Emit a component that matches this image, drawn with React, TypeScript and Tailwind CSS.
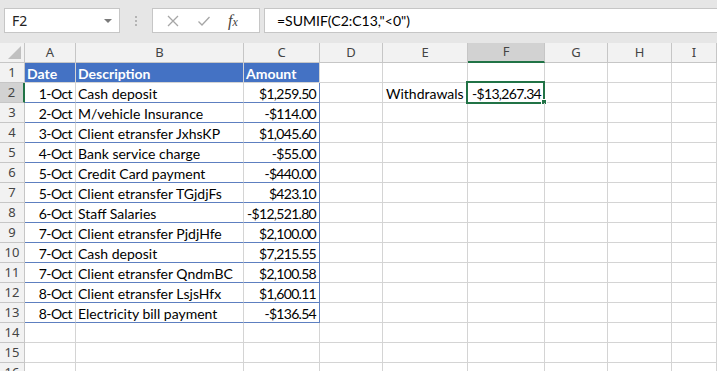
import React from 'react';

const cols = ['A', 'B', 'C', 'D', 'E', 'F', 'G', 'H', 'I'];

const rows: [string, string, string][] = [
  ['1-Oct', 'Cash deposit', '$1,259.50'],
  ['2-Oct', 'M/vehicle Insurance', '-$114.00'],
  ['3-Oct', 'Client etransfer JxhsKP', '$1,045.60'],
  ['4-Oct', 'Bank service charge', '-$55.00'],
  ['5-Oct', 'Credit Card payment', '-$440.00'],
  ['5-Oct', 'Client etransfer TGjdjFs', '$423.10'],
  ['6-Oct', 'Staff Salaries', '-$12,521.80'],
  ['7-Oct', 'Client etransfer PjdjHfe', '$2,100.00'],
  ['7-Oct', 'Cash deposit', '$7,215.55'],
  ['7-Oct', 'Client etransfer QndmBC', '$2,100.58'],
  ['8-Oct', 'Client etransfer LsjsHfx', '$1,600.11'],
  ['8-Oct', 'Electricity bill payment', '-$136.54'],
];

const cellFont = { fontFamily: 'Lato, "Liberation Sans", sans-serif' };
const uiFont = { fontFamily: '"Noto Sans", "Open Sans", sans-serif' };

const Cell: React.FC<{ className?: string; children?: React.ReactNode }> = ({ className = '', children }) => (
  <div
    className={`h-[20px] box-border border-r border-b border-[#d4d4d4] flex items-center pt-[1px] overflow-visible whitespace-nowrap text-[14px] text-black ${className}`}
    style={cellFont}
  >
    {children}
  </div>
);

export default function App() {
  const body: React.ReactNode[] = [];

  // header row
  body.push(
    <div key="corner" className="h-[20px] box-border border-r border-b border-[#c6c6c6] bg-[#f2f2f2] relative">
      <div className="absolute right-[3px] bottom-[3px] w-0 h-0 border-l-[13px] border-l-transparent border-b-[13px] border-b-[#c0c0c0]" />
    </div>
  );
  cols.forEach(c => {
    const sel = c === 'F';
    body.push(
      <div
        key={'h' + c}
        className={`h-[20px] box-border border-r border-[#c6c6c6] flex items-center justify-center text-[13px] ${
          sel ? 'bg-[#d2d2d2] text-[#444] border-b-2 border-b-[#217346]' : 'bg-[#f2f2f2] text-[#444] border-b'
        }`}
        style={uiFont}
      >
        {c}
      </div>
    );
  });

  for (let r = 1; r <= 16; r++) {
    const selRow = r === 2;
    body.push(
      <div
        key={'r' + r}
        className={`h-[20px] box-border border-b border-[#c6c6c6] flex items-center justify-center text-[13px] text-[#444] ${
          selRow ? 'bg-[#d2d2d2] border-r-2 border-r-[#217346]' : 'bg-[#f2f2f2] border-r'
        }`}
        style={uiFont}
      >
        {r}
      </div>
    );

    const data = r >= 2 && r <= 13 ? rows[r - 2] : null;
    const tableLine = 'border-b-[#5d7fc0]';

    if (r === 1) {
      body.push(
        <Cell key="a1" className="bg-[#4472c4] border-[#4472c4] text-white font-bold pl-[2px]">Date</Cell>,
        <Cell key="b1" className="bg-[#4472c4] border-[#4472c4] text-white font-bold pl-[2px]">Description</Cell>,
        <Cell key="c1" className="bg-[#4472c4] border-[#4472c4] text-white font-bold pl-[2px]">Amount</Cell>
      );
    } else if (data) {
      body.push(
        <Cell key={'a' + r} className={`justify-end pr-[3px] tracking-[-0.6px] ${tableLine}`}>{data[0]}</Cell>,
        <Cell key={'b' + r} className={`pl-[2px] ${tableLine}`}>{data[1]}</Cell>,
        <Cell key={'c' + r} className={`justify-end pr-[3px] tracking-[-0.7px] ${tableLine} border-r-[#5d7fc0]`}>{data[2]}</Cell>
      );
    } else {
      body.push(<Cell key={'a' + r} />, <Cell key={'b' + r} />, <Cell key={'c' + r} />);
    }

    // D..I
    body.push(<Cell key={'d' + r} />);
    body.push(<Cell key={'e' + r} className="pl-[3px]">{r === 2 ? 'Withdrawals' : null}</Cell>);
    body.push(
      <Cell key={'f' + r} className="justify-end pr-[3px] relative">
        {r === 2 && (
          <>
            <span className="tracking-[-0.7px]">-$13,267.34</span>
            <div className="absolute -left-[2px] -top-[2px] w-[79px] h-[23px] border-2 border-[#217346]" />
            <div className="absolute -right-[3px] -bottom-[3px] w-[6px] h-[6px] bg-[#217346] border border-white" />
          </>
        )}
      </Cell>
    );
    body.push(<Cell key={'g' + r} />, <Cell key={'h' + r} />, <Cell key={'i' + r} />);
  }

  return (
    <div className="w-[717px] h-[371px] overflow-hidden bg-white">
      {/* formula bar */}
      <div className="h-[43px] bg-[#e6e6e6] flex items-start pt-[8px] pl-[4px]" style={uiFont}>
        <div className="w-[116px] h-[25px] bg-white border border-[#c6c6c6] flex items-center justify-between pl-[7px] pr-[7px]">
          <span className="text-[14px] text-[#222]">F2</span>
          <div className="w-0 h-0 border-l-[4px] border-r-[4px] border-t-[4px] border-l-transparent border-r-transparent border-t-[#7a7a7a]" />
        </div>
        <div className="w-[32px] h-[25px] flex flex-col items-center justify-center gap-[2px]">
          <div className="w-[2px] h-[2px] bg-[#b4b4b4]" />
          <div className="w-[2px] h-[2px] bg-[#b4b4b4]" />
          <div className="w-[2px] h-[2px] bg-[#b4b4b4]" />
        </div>
        <div className="w-[108px] h-[25px] bg-white border border-[#c6c6c6] flex items-center">
          <svg width="14" height="14" viewBox="0 0 14 14" className="ml-[13px]">
            <path d="M2 2 L12 12 M12 2 L2 12" stroke="#a6a6a6" strokeWidth="1.3" fill="none" />
          </svg>
          <svg width="14" height="14" viewBox="0 0 14 14" className="ml-[17px]">
            <path d="M1.5 7.5 L5 11 L12.5 3" stroke="#a6a6a6" strokeWidth="1.3" fill="none" />
          </svg>
          <span
            className="ml-[17px] text-[16px] italic text-[#444]"
            style={{ fontFamily: '"Liberation Serif", serif' }}
          >
            f<span className="text-[12px]">x</span>
          </span>
        </div>
        <div className="ml-[4px] flex-1 h-[25px] bg-white border border-[#c6c6c6] border-r-0 flex items-center pl-[12px]">
          <span className="text-[14px] text-black" style={cellFont}>=SUMIF(C2:C13,"&lt;0")</span>
        </div>
      </div>

      {/* grid */}
      <div className="grid grid-cols-[25px_51px_168px_76px_63px_85px_77px_63px_64px_45px]">{body}</div>
    </div>
  );
}
